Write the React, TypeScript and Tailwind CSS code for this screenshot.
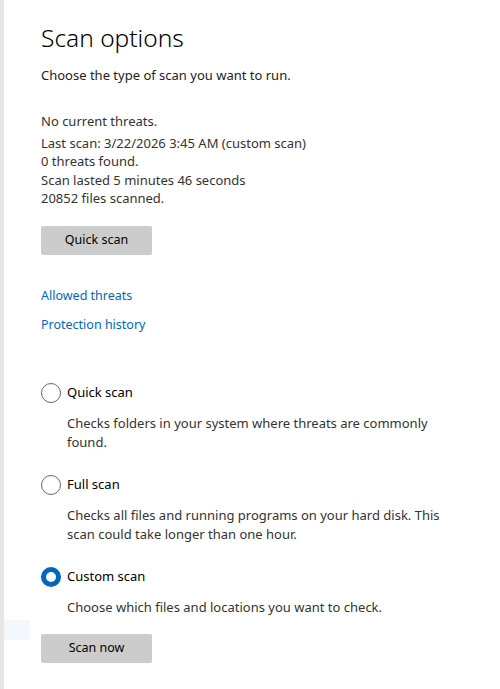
import React from "react";

const font = { fontFamily: '"Noto Sans", "Open Sans", sans-serif' };

function Radio({ checked }: { checked?: boolean }) {
  if (checked) {
    return (
      <span className="flex h-[20px] w-[20px] shrink-0 items-center justify-center rounded-full bg-[#0067c0]">
        <span className="h-[10px] w-[10px] rounded-full bg-white" />
      </span>
    );
  }
  return <span className="h-[20px] w-[20px] shrink-0 rounded-full border border-[#666] bg-white" />;
}

function Option({ label, desc, checked }: { label: string; desc: string; checked?: boolean }) {
  return (
    <div className="flex flex-col">
      <div className="flex h-[20px] items-center gap-[6px]">
        <Radio checked={checked} />
        <span className="text-[13px] text-black">{label}</span>
      </div>
      <p className="mt-[11px] pl-[26px] pr-[30px] text-[13px] leading-[19px] text-[#333]">{desc}</p>
    </div>
  );
}

export default function App() {
  return (
    <div className="relative flex h-[689px] w-[500px] bg-white" style={font}>
      <div className="w-[4px] shrink-0 bg-[#e6e6e6]" />
      <div className="flex flex-1 flex-col pl-[37px] pt-[20px]">
        <h1 className="text-[24.5px] font-light leading-[36px] text-black">Scan options</h1>
        <p className="mt-[9px] text-[13px] leading-[20px] text-[#222]">
          Choose the type of scan you want to run.
        </p>

        <div className="mt-[27px] text-[13px] leading-[18.5px] text-[#333]">
          <p>No current threats.</p>
          <p className="mt-[3px]">Last scan: 3/22/2026 3:45 AM (custom scan)</p>
          <p>0 threats found.</p>
          <p>Scan lasted 5 minutes 46 seconds</p>
          <p>20852 files scanned.</p>
        </div>

        <button className="mt-[18px] h-[29px] w-[111px] rounded-[2px] bg-[#cccccc] text-[12.5px] text-black">
          Quick scan
        </button>

        <div className="mt-[31px] flex flex-col gap-[10px] text-[12.5px] leading-[19px] text-[#0067c0]">
          <a>Allowed threats</a>
          <a>Protection history</a>
        </div>

        <div className="mt-[49px] flex flex-col gap-[23px]">
          <Option
            label="Quick scan"
            desc="Checks folders in your system where threats are commonly found."
          />
          <Option
            label="Full scan"
            desc="Checks all files and running programs on your hard disk. This scan could take longer than one hour."
          />
          <Option
            label="Custom scan"
            desc="Choose which files and locations you want to check."
            checked
          />
        </div>

        <button className="mt-[17px] h-[29px] w-[111px] rounded-[2px] bg-[#cccccc] text-[12.5px] text-black">
          Scan now
        </button>
      </div>
      {/* faint hover highlight left behind */}
      <div className="pointer-events-none absolute left-[4px] top-[620px] h-[20px] w-[26px] bg-[#f2f8fd]" />
    </div>
  );
}
